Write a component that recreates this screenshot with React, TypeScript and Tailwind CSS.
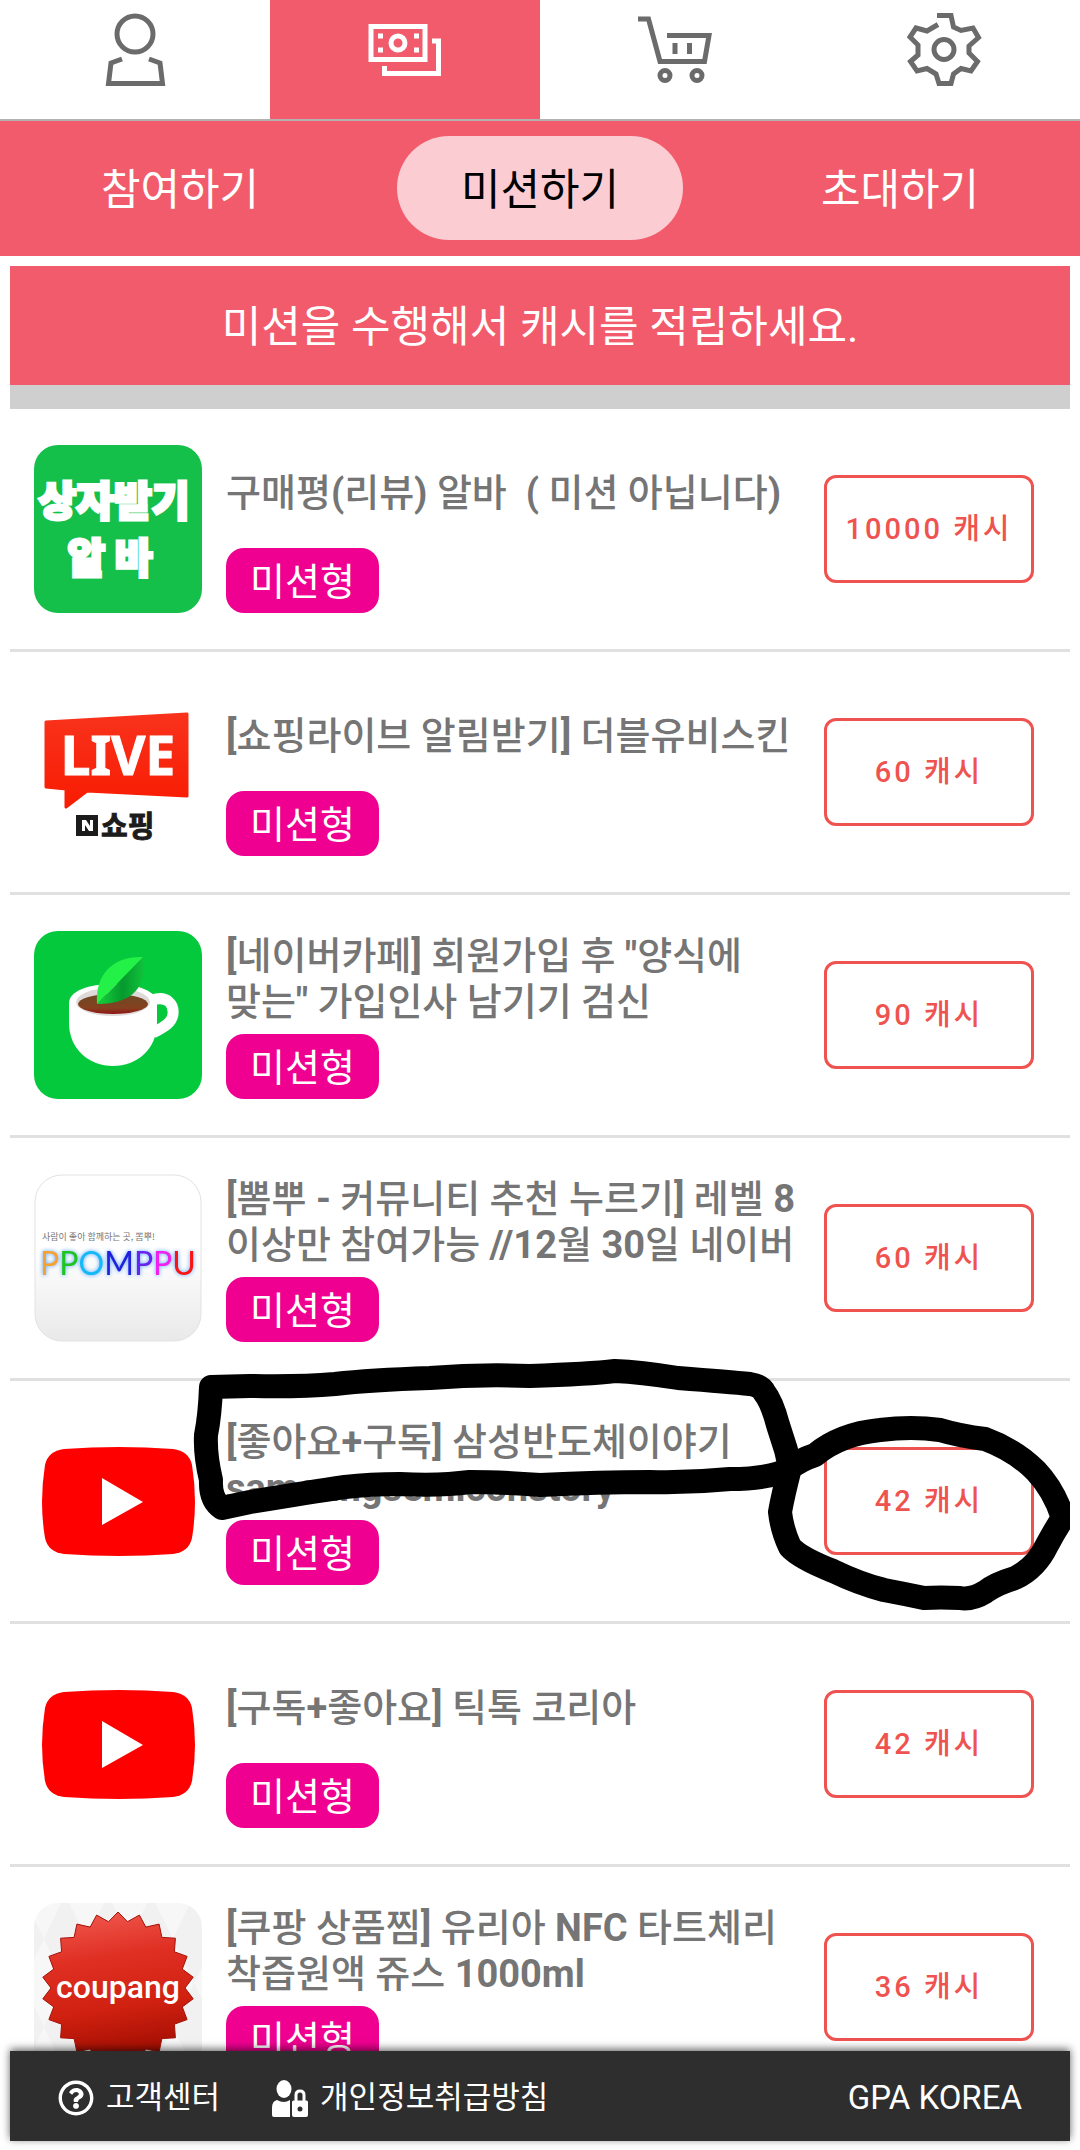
import React from 'react';
import { FaRegQuestionCircle } from 'react-icons/fa';

interface Mission {
  id: number;
  title: string[];
  reward: number;
  icon: React.ReactNode;
  marked?: boolean;
}

const AlbaIcon = () => (
  <svg viewBox="0 0 168 168" className="size-full" role="img" aria-label="상자받기 알바">
    <rect width="168" height="168" rx="24" fill="#14bf4a" />
    <g
      fill="#fff"
      stroke="#fff"
      strokeWidth="3"
      className="font-['Noto_Sans_CJK_KR',sans-serif] text-[41px] font-black"
    >
      <text x="80" y="71" textAnchor="middle">상자받기</text>
      <text x="76" y="128" textAnchor="middle">알 바</text>
    </g>
  </svg>
);

const LiveIcon = () => (
  <svg viewBox="0 0 168 168" className="size-full" role="img" aria-label="LIVE N쇼핑">
    <defs>
      <linearGradient id="live" x1="0" y1="0" x2="0" y2="1">
        <stop offset="0" stopColor="#f9321c" />
        <stop offset="1" stopColor="#f81c02" />
      </linearGradient>
    </defs>
    <path
      d="M12 34L153 26V108L53 103L32 119V101L12 99Z"
      fill="url(#live)"
      stroke="url(#live)"
      strokeWidth="3"
      strokeLinejoin="round"
    />
    <text
      x="84"
      y="87"
      textAnchor="middle"
      fill="#fff"
      stroke="#fff"
      className="font-['Noto_Sans',sans-serif] text-[53px] font-bold"
    >
      LIVE
    </text>
    <rect x="42" y="127" width="22" height="21" fill="#1c1c1c" />
    <path d="M48 143V132H52L56 138V132H59V143H55L51 137V143Z" fill="#fff" />
    <text
      x="67"
      y="149"
      fill="#1c1c1c"
      stroke="#1c1c1c"
      className="font-['Noto_Sans_CJK_KR',sans-serif] text-[29px] font-bold"
    >
      쇼핑
    </text>
  </svg>
);

const CafeIcon = () => (
  <svg viewBox="0 0 168 168" className="size-full" role="img" aria-label="네이버카페">
    <defs>
      <linearGradient id="coffee" x1="0" y1="0" x2="0" y2="1">
        <stop offset="0" stopColor="#6b4a26" />
        <stop offset="0.7" stopColor="#86401f" />
        <stop offset="1" stopColor="#8e1616" />
      </linearGradient>
      <linearGradient id="leaf" x1="0" y1="0" x2="1" y2="0">
        <stop offset="0.1" stopColor="#12c93a" />
        <stop offset="0.55" stopColor="#059a2d" />
        <stop offset="1" stopColor="#10c23c" />
      </linearGradient>
    </defs>
    <rect width="168" height="168" rx="24" fill="#04c93c" />
    <path d="M118 69C134 64 140 74 139 83C138 92 130 96 119 102" fill="none" stroke="#fff" strokeWidth="11" />
    <path
      d="M35 72C35 60 55 53 79 53C103 53 123 60 123 72V92C123 118 103 135 79 135C55 135 35 118 35 92Z"
      fill="#fff"
    />
    <ellipse cx="79" cy="71" rx="37" ry="14" fill="#dedada" />
    <ellipse cx="79" cy="73" rx="35" ry="10" fill="url(#coffee)" />
    <path d="M63 73C92 73 114 62 109 26Z" fill="url(#leaf)" />
    <path d="M63 73C61 42 80 25 109 26Z" fill="#24f148" />
  </svg>
);

const PpomppuIcon = () => (
  <svg viewBox="0 0 168 168" className="size-full" role="img" aria-label="PPOMPPU">
    <defs>
      <linearGradient id="ppom" x1="0" y1="0" x2="0" y2="1">
        <stop offset="0.45" stopColor="#fff" />
        <stop offset="1" stopColor="#e9e9e9" />
      </linearGradient>
    </defs>
    <rect x="1" y="1" width="166" height="166" rx="27" fill="url(#ppom)" stroke="#e2e2e2" />
    <text x="8" y="66" fill="#777" className="font-['Noto_Sans_CJK_KR',sans-serif] text-[9px]">
      사람이 좋아 함께하는 곳, 뽐뿌!
    </text>
    <text
      x="84"
      y="101"
      textAnchor="middle"
      className="font-['Lato',sans-serif] text-[32px] drop-shadow-[0_0_2px_#4f9fff]"
    >
      <tspan fill="#f9a12e">P</tspan>
      <tspan fill="#1fc41f">P</tspan>
      <tspan fill="#14b9f5">O</tspan>
      <tspan fill="#2222dd">M</tspan>
      <tspan fill="#6a22f0">P</tspan>
      <tspan fill="#f020f0">P</tspan>
      <tspan fill="#fa1414">U</tspan>
    </text>
  </svg>
);

const YoutubeIcon = () => (
  <svg viewBox="0 0 168 168" className="size-full" role="img" aria-label="YouTube">
    <path
      d="M30 32Q85 28 139 32Q155 34 158 48Q164 85 158 121Q155 135 139 137Q85 141 30 137Q14 135 11 121Q5 85 11 48Q14 34 30 32Z"
      fill="#f00"
    />
    <path d="M68 61L109 85L68 108Z" fill="#fff" />
  </svg>
);

// 22 pointed seal, alternating outer and inner radius
const sealPoints = Array.from({ length: 44 }, (_, i) => {
  const r = i % 2 === 0 ? 76 : 67;
  const a = (i * Math.PI) / 22 - Math.PI / 2;
  return `${(84 + r * Math.cos(a)).toFixed(1)},${(85 + r * Math.sin(a)).toFixed(1)}`;
}).join(' ');

const CoupangIcon = () => (
  <svg viewBox="0 0 168 168" className="size-full" role="img" aria-label="coupang">
    <defs>
      <linearGradient id="seal" x1="0.3" y1="0" x2="0.45" y2="1">
        <stop offset="0" stopColor="#f0574d" />
        <stop offset="0.3" stopColor="#e03024" />
        <stop offset="0.65" stopColor="#cf2010" />
        <stop offset="1" stopColor="#9c0c00" />
      </linearGradient>
      <pattern id="argyle" width="43" height="88" patternUnits="userSpaceOnUse" x="10" y="-8">
        <rect width="43" height="88" fill="#f7f7f7" />
        <path d="M21 0L43 44L21 88L0 44Z" fill="#f1f1f1" />
      </pattern>
    </defs>
    <rect width="168" height="168" rx="24" fill="url(#argyle)" />
    <polygon points={sealPoints} fill="url(#seal)" stroke="#a31208" />
    <text x="84" y="95" textAnchor="middle" fill="#fff" className="font-['Roboto',sans-serif] text-[32px] font-medium">
      coupang
    </text>
  </svg>
);

const UserLockIcon = () => (
  <svg viewBox="0 0 36 37" className="h-[37px] w-9" fill="currentColor" aria-hidden="true">
    <ellipse cx="12" cy="9" rx="7.500" ry="9" />
    <path d="M5 20Q12 24 18 20V37H2Q0 37 0 35V28Q0 21 5 20Z" />
    <path
      fillRule="evenodd"
      d="M20 22Q20 20.500 21.500 20.500H34.500Q36 20.500 36 22V35Q36 37 34 37H22Q20 37 20 35ZM28 26.500A2.500 2.500 0 1 0 28 31.500A2.500 2.500 0 1 0 28 26.500Z"
    />
    <path d="M24 21V15Q24 11 28 11Q32 11 32 15V21" fill="none" stroke="currentColor" strokeWidth="3" />
  </svg>
);

const missions: Mission[] = [
  { id: 1, title: ['구매평(리뷰) 알바  ( 미션 아닙니다)'], reward: 10000, icon: <AlbaIcon /> },
  { id: 2, title: ['[쇼핑라이브 알림받기] 더블유비스킨'], reward: 60, icon: <LiveIcon /> },
  { id: 3, title: ['[네이버카페] 회원가입 후 "양식에', '맞는" 가입인사 남기기 검신'], reward: 90, icon: <CafeIcon /> },
  {
    id: 4,
    title: ['[뽐뿌 - 커뮤니티 추천 누르기] 레벨 8', '이상만 참여가능 //12월 30일 네이버'],
    reward: 60,
    icon: <PpomppuIcon />,
  },
  {
    id: 5,
    title: ['[좋아요+구독] 삼성반도체이야기', 'samsungsemiconstory'],
    reward: 42,
    icon: <YoutubeIcon />,
    marked: true,
  },
  { id: 6, title: ['[구독+좋아요] 틱톡 코리아'], reward: 42, icon: <YoutubeIcon /> },
  { id: 7, title: ['[쿠팡 상품찜] 유리아 NFC 타트체리', '착즙원액 쥬스 1000ml'], reward: 36, icon: <CoupangIcon /> },
];

const tabs = [
  {
    label: '내 정보',
    icon: (
      <>
        <circle cx="40" cy="24" r="18" />
        <path d="M27 49L16 53L13.500 73.500H67.500L65 53L54 49" />
      </>
    ),
  },
  {
    label: '캐시',
    active: true,
    icon: (
      <>
        <rect x="6" y="16.500" width="54" height="33" />
        <circle cx="33" cy="33" r="7" />
        <path d="M13 26H18M49 26H54M13 40H18M49 40H54M67 31H73.500V63.500H19.500V56" />
      </>
    ),
  },
  {
    label: '쇼핑',
    icon: (
      <>
        <path d="M3 9H13.500L25 51.500H69.500L74 25.500H32M40 33V44M54.500 33V44" />
        <circle cx="30" cy="65.500" r="5" />
        <circle cx="62" cy="65.500" r="5" />
      </>
    ),
  },
  {
    label: '설정',
    icon: (
      <>
        <circle cx="39" cy="39.500" r="10" />
        <path d="M32 5.500H46L48.500 17L56 20.500L68 18L73.500 27.500L64 36V43L72.500 51.500L66 61L56 58.500L48.500 64L46 73.500H34L31 64L22 58.500L12 61L5.500 51.500L13 45V35L5 27L11 18L22 21L33 14.500" />
      </>
    ),
  },
];

// Hand drawn marker strokes, they lie over the row they belong to
const MarkerStrokes = () => (
  <svg
    viewBox="10 1381 1060 240"
    className="pointer-events-none absolute inset-0 size-full overflow-visible"
    fill="none"
    stroke="#000"
    strokeWidth="24"
    strokeLinejoin="round"
    strokeLinecap="round"
    aria-hidden="true"
  >
    <path d="M211 1387L250 1386Q300 1387 335 1384Q370 1380 430 1378Q480 1374 530 1376Q590 1374 615 1371Q640 1372 678 1378Q730 1382 750 1384Q762 1386 764 1392Q772 1402 778 1425L786 1450L790 1468Q772 1479 730 1479Q690 1483 650 1482Q600 1482 540 1485Q500 1482 470 1482Q440 1486 400 1484Q370 1484 345 1487Q310 1492 250 1502L222 1508Q210 1500 211 1480Q205 1455 206 1435Q210 1415 211 1387Z" />
    <path d="M790 1468Q800 1460 815 1455Q840 1434 880 1430Q912 1426 940 1430Q960 1436 985 1439Q1015 1450 1036 1471Q1054 1490 1063 1518Q1055 1530 1047 1545Q1036 1568 1015 1578Q995 1584 985 1592Q972 1600 960 1598Q940 1597 924 1598Q905 1594 884 1590Q860 1584 833 1571Q800 1558 790 1547Q782 1530 780 1512Q783 1495 790 1468Z" />
  </svg>
);

// Latin letters, digits and brackets are set heavier than the Hangul around them
const TitleLine = ({ text }: { text: string }) => (
  <span className="block">
    {text.split(/([!-~]+)/).map((part, i) => (i % 2 === 1 ? <b key={i}>{part}</b> : part))}
  </span>
);

const MissionRow: React.FC<{ mission: Mission }> = ({ mission }) => (
  <li className="relative flex shrink-0 items-center gap-6 border-b-3 border-[#e0e0e0] py-9 pr-9 pl-6">
    <div className="size-[168px] shrink-0">{mission.icon}</div>
    <div className="flex h-[168px] min-w-0 flex-1 flex-col items-start">
      <div className="flex h-24 items-center">
        <h2 className="text-[38px] leading-[46px] font-medium whitespace-pre text-[#757575]">
          {mission.title.map((line) => (
            <TitleLine key={line} text={line} />
          ))}
        </h2>
      </div>
      <span className="mt-auto rounded-[18px] bg-[#ef0090] px-6 pt-1 text-[38px] leading-[61px] text-white">
        미션형
      </span>
    </div>
    <button
      type="button"
      className="h-27 w-[210px] shrink-0 rounded-xl border-3 border-[#ef5350] pt-0.5 text-[29px] font-medium tracking-[3px] text-[#ef5350]"
    >
      {mission.reward} 캐시
    </button>
    {mission.marked && <MarkerStrokes />}
  </li>
);

export default function App() {
  return (
    <div className="flex h-screen flex-col bg-white font-['Roboto','Noto_Sans_CJK_KR',sans-serif]">
      <nav className="grid shrink-0 grid-cols-4 border-b-2 border-[#b5b0b0]">
        {tabs.map((tab) => (
          <button
            key={tab.label}
            type="button"
            aria-label={tab.label}
            className={`flex justify-center pt-2.5 pb-[29px] ${tab.active ? 'bg-[#f25b6b] text-white' : 'text-[#6b6b6b]'}`}
          >
            <svg viewBox="0 0 80 80" className="size-20" fill="none" stroke="currentColor" strokeWidth="5">
              {tab.icon}
            </svg>
          </button>
        ))}
      </nav>

      <nav className="grid shrink-0 grid-cols-3 place-items-center bg-[#f25b6b] pt-[15px] pb-4 text-[43px] text-white">
        <a href="#join" className="pt-1">참여하기</a>
        <a
          href="#mission"
          aria-current="page"
          className="rounded-full bg-[#fbccd2] px-16 pt-1 leading-[100px] text-black"
        >
          미션하기
        </a>
        <a href="#invite" className="pt-1">초대하기</a>
      </nav>

      <main className="mx-2.5 mt-2.5 flex min-h-0 flex-1 flex-col">
        <h1 className="shrink-0 border-b-24 border-[#cfcfcf] bg-[#f25b6b] pt-1 text-center text-[43px] leading-[115px] text-white">
          미션을 수행해서 캐시를 적립하세요.
        </h1>
        <ul className="flex min-h-0 flex-1 flex-col overflow-hidden">
          {missions.map((mission) => (
            <MissionRow key={mission.id} mission={mission} />
          ))}
        </ul>
      </main>

      <footer className="relative mx-2.5 mb-[9px] flex h-[90px] shrink-0 items-center bg-[#2e2e2e] px-12 pt-1 text-[31px] text-white shadow-[0_-2px_8px_rgba(0,0,0,0.6)]">
        <a href="#help" className="flex items-center gap-3">
          <FaRegQuestionCircle size={36} />
          고객센터
        </a>
        <a href="#privacy" className="ml-13 flex items-center gap-3">
          <UserLockIcon />
          개인정보취급방침
        </a>
        <span className="ml-auto text-[33px]">GPA KOREA</span>
      </footer>
    </div>
  );
}
